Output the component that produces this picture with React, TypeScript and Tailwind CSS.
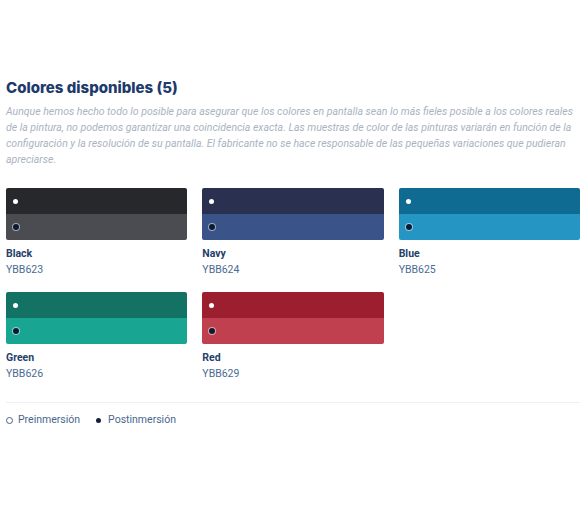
import React from 'react';

type Swatch = { name: string; code: string; top: string; bottom: string };

const swatches: Swatch[] = [
  { name: 'Black', code: 'YBB623', top: 'bg-[#26282c]', bottom: 'bg-[#4a4c51]' },
  { name: 'Navy', code: 'YBB624', top: 'bg-[#2a3050]', bottom: 'bg-[#3a5388]' },
  { name: 'Blue', code: 'YBB625', top: 'bg-[#0f6b91]', bottom: 'bg-[#2596c3]' },
  { name: 'Green', code: 'YBB626', top: 'bg-[#137264]', bottom: 'bg-[#18a693]' },
  { name: 'Red', code: 'YBB629', top: 'bg-[#9c1f30]', bottom: 'bg-[#c1404f]' },
];

const SwatchCard = ({ s }: { s: Swatch }) => (
  <div>
    <div className="h-[52px] rounded-[2px] overflow-hidden flex flex-col">
      <div className={`h-[26px] flex items-center pl-[7px] ${s.top}`}>
        <span className="w-[5px] h-[5px] rounded-full bg-white" />
      </div>
      <div className={`h-[26px] flex items-center pl-[7px] ${s.bottom}`}>
        <span className="w-[6px] h-[6px] rounded-full bg-[#0c1a33] ring-1 ring-white/50" />
      </div>
    </div>
    <div className="mt-[6px] text-[10.5px] leading-[16px] font-bold text-[#24406b]">{s.name}</div>
    <div className="text-[10.5px] leading-[16px] text-[#4b6b94]">{s.code}</div>
  </div>
);

export default function App() {
  return (
    <div className="w-full h-[506px] bg-white pt-[78px] pl-[6px] pr-[8px]" style={{ fontFamily: 'Roboto, "Liberation Sans", sans-serif' }}>
      <h2 className="text-[15px] leading-[20px] font-extrabold text-[#1d3a6c]" style={{ fontFamily: 'Inter, Roboto, sans-serif' }}>Colores disponibles (5)</h2>
      <p className="mt-[6px] text-[10.5px] leading-[16px] italic text-[#a9b3c2]">
        Aunque hemos hecho todo lo posible para asegurar que los colores en pantalla sean lo más fieles posible a los colores reales de la pintura, no podemos garantizar una coincidencia exacta. Las muestras de color de las pinturas variarán en función de la configuración y la resolución de su pantalla. El fabricante no se hace responsable de las pequeñas variaciones que pudieran apreciarse.
      </p>
      <div className="mt-[20px] grid grid-cols-3 gap-x-[15px] gap-y-[14px]">
        {swatches.map(s => <SwatchCard key={s.code} s={s} />)}
      </div>
      <div className="mt-[20px] border-t border-[#eef0f3] pt-[9px] flex items-center text-[10.5px] leading-[16px] text-[#4a6890]">
        <span className="w-[7px] h-[7px] rounded-full border border-[#4a6287] ml-[0px] mr-[5px]" />
        <span>Preinmersión</span>
        <span className="w-[5px] h-[5px] rounded-full bg-[#10213f] ml-[16px] mr-[7px]" />
        <span>Postinmersión</span>
      </div>
    </div>
  );
}
